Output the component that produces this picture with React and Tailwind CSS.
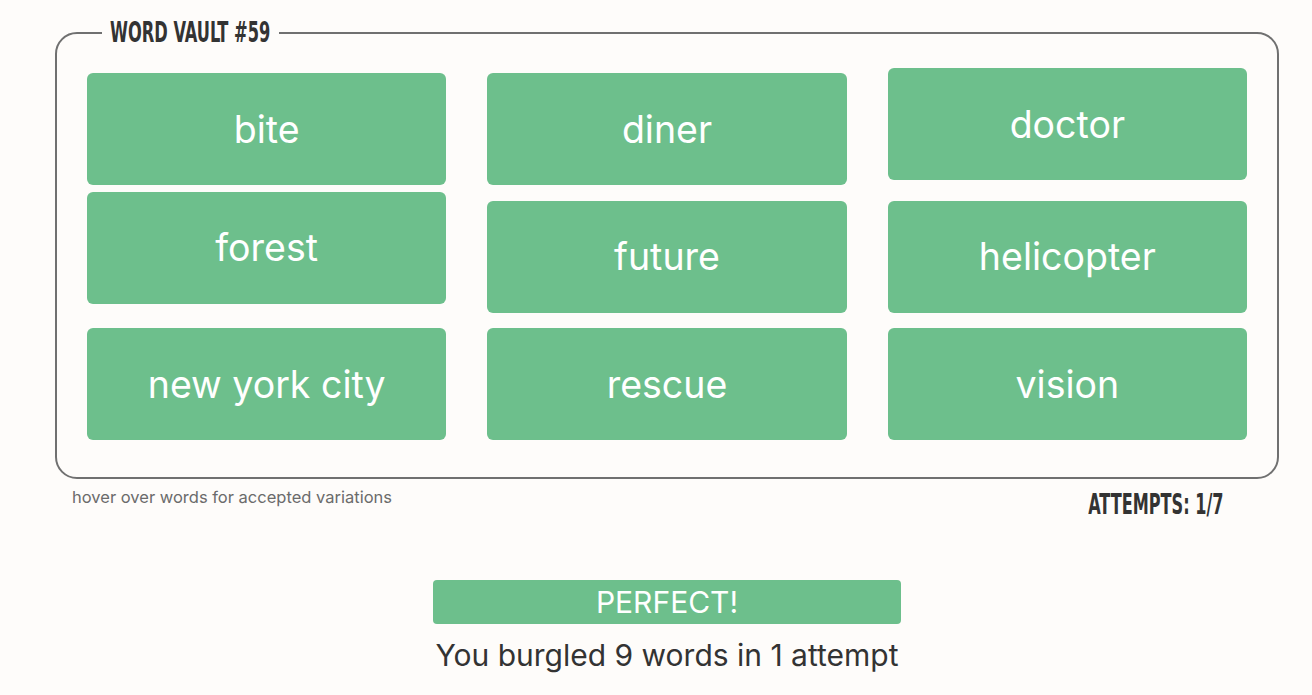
import React from "react";

const words = [
  { w: "bite", shift: "" },
  { w: "diner", shift: "" },
  { w: "doctor", shift: "-translate-y-[5px]" },
  { w: "forest", shift: "-translate-y-[9px]" },
  { w: "future", shift: "" },
  { w: "helicopter", shift: "" },
  { w: "new york city", shift: "" },
  { w: "rescue", shift: "" },
  { w: "vision", shift: "" },
];

const condensed = { fontFamily: '"DejaVu Sans Condensed", "Liberation Sans", sans-serif' };

export default function App() {
  return (
    <div
      className="min-h-screen w-full bg-[#fefcfa] overflow-hidden"
      style={{ fontFamily: "Inter, 'Noto Sans', sans-serif" }}
    >
      <div className="ml-[55px] w-[1224px] pt-[19px]">
        <fieldset className="border-2 border-[#707070] rounded-[22px] px-[30px] pt-[26px] pb-[37px]">
          <legend className="ml-[15px] w-[177px] px-[8px] h-[28px] overflow-visible">
            <span
              className="inline-block origin-left scale-x-[0.645] whitespace-nowrap text-[28px] leading-[28px] font-bold text-[#333]"
              style={condensed}
            >
              WORD VAULT #59
            </span>
          </legend>
          <div className="grid grid-cols-3 gap-x-[41px] gap-y-[15.5px]">
            {words.map((t) => (
              <div
                key={t.w}
                className={`h-[112px] rounded-[6px] bg-[#6dbf8c] flex items-center justify-center text-white text-[37.5px] pt-[2px] ${t.shift}`}
              >
                {t.w}
              </div>
            ))}
          </div>
        </fieldset>
        <div className="flex justify-between items-start">
          <div className="ml-[17px] mt-[6px] text-[16.5px] text-[#6b6b6b]">
            hover over words for accepted variations
          </div>
          <div className="mr-[55px] mt-[12px] w-[134px] h-[28px] flex justify-end">
            <span
              className="inline-block origin-right scale-x-[0.64] whitespace-nowrap text-[28px] leading-[28px] font-bold text-[#333]"
              style={condensed}
            >
              ATTEMPTS: 1/7
            </span>
          </div>
        </div>
        <div className="flex flex-col items-center mt-[61px]">
          <div className="w-[468px] h-[44px] rounded-[4px] bg-[#6dbf8c] text-white text-[30px] flex items-center justify-center">
            PERFECT!
          </div>
          <div className="mt-[9px] text-[30px] text-[#333]">
            You burgled 9 words in 1 attempt
          </div>
        </div>
      </div>
    </div>
  );
}
